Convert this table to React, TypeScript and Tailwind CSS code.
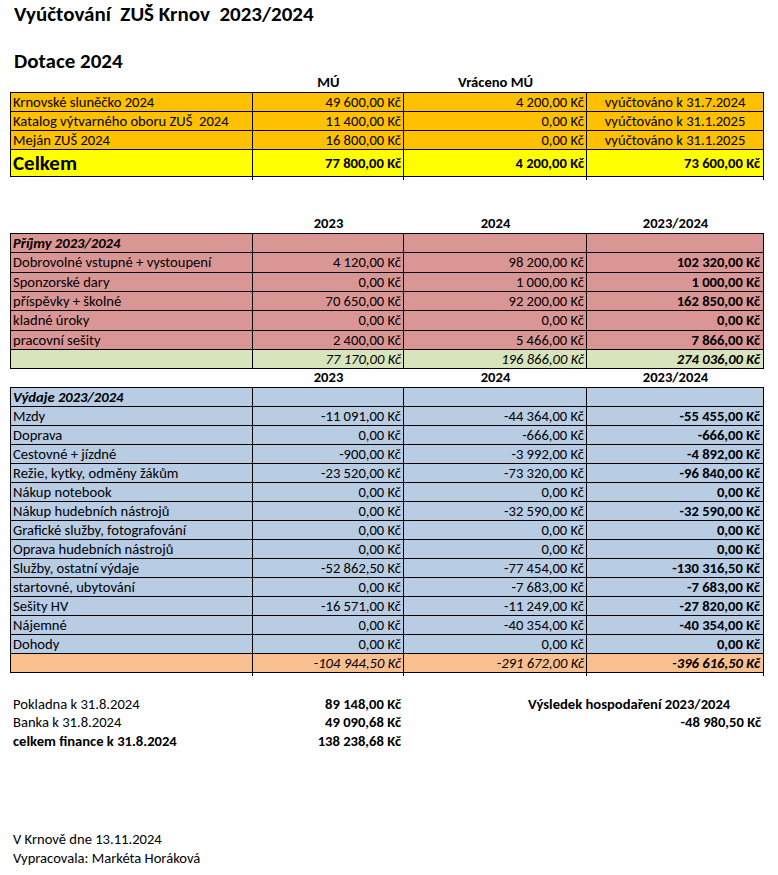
import React from "react";

const COLS = "grid grid-cols-[242px_151px_183px_177px]";
const FONT = { fontFamily: "Carlito, Lato, 'Open Sans', sans-serif" };

type C = { t?: string; a?: "l" | "r" | "c"; cls?: string };

function Row({ cells, bg, h }: { cells: C[]; bg: string; h: string }) {
  return (
    <div className={`${COLS} ${bg} ${h} overflow-hidden`}>
      {cells.map((c, i) => (
        <div
          key={i}
          className={`border-r border-b border-black flex items-center leading-[15px] whitespace-pre ${
            c.a === "r" ? "justify-end pr-[2px]" : c.a === "c" ? "justify-center" : "justify-start pl-[2px]"
          } ${c.cls ?? ""}`}
        >
          {c.t ?? ""}
        </div>
      ))}
    </div>
  );
}

function Header({ a, b, c, h }: { a: string; b: string; c: string; h: string }) {
  return (
    <div className={`${COLS} ${h} font-bold ml-[1px] leading-[14px]`}>
      <div />
      <div className="flex items-center justify-center pb-[2px]">{a}</div>
      <div className="flex items-center justify-center pb-[2px]">{b}</div>
      <div className="flex items-center justify-center pb-[2px]">{c}</div>
    </div>
  );
}

function Stub({ h }: { h: string }) {
  return (
    <div className={`${COLS} ${h} ml-[1px]`}>
      <div />
      <div className="border-l border-black -ml-[1px]" />
      <div className="border-l border-black -ml-[1px]" />
      <div className="border-l border-r border-black -ml-[1px]" />
    </div>
  );
}

const prijmy: [string, string, string, string][] = [
  ["Dobrovolné vstupné + vystoupení", "4 120,00 Kč", "98 200,00 Kč", "102 320,00 Kč"],
  ["Sponzorské dary", "0,00 Kč", "1 000,00 Kč", "1 000,00 Kč"],
  ["příspěvky + školné", "70 650,00 Kč", "92 200,00 Kč", "162 850,00 Kč"],
  ["kladné úroky", "0,00 Kč", "0,00 Kč", "0,00 Kč"],
  ["pracovní sešity", "2 400,00 Kč", "5 466,00 Kč", "7 866,00 Kč"],
];
const prijmyH = ["h-[20px]", "h-[19px]", "h-[19px]", "h-[20px]", "h-[19px]"];

const vydaje: [string, string, string, string][] = [
  ["Mzdy", "-11 091,00 Kč", "-44 364,00 Kč", "-55 455,00 Kč"],
  ["Doprava", "0,00 Kč", "-666,00 Kč", "-666,00 Kč"],
  ["Cestovné + jízdné", "-900,00 Kč", "-3 992,00 Kč", "-4 892,00 Kč"],
  ["Režie, kytky, odměny žákům", "-23 520,00 Kč", "-73 320,00 Kč", "-96 840,00 Kč"],
  ["Nákup notebook", "0,00 Kč", "0,00 Kč", "0,00 Kč"],
  ["Nákup hudebních nástrojů", "0,00 Kč", "-32 590,00 Kč", "-32 590,00 Kč"],
  ["Grafické služby, fotografování", "0,00 Kč", "0,00 Kč", "0,00 Kč"],
  ["Oprava hudebních nástrojů", "0,00 Kč", "0,00 Kč", "0,00 Kč"],
  ["Služby, ostatní výdaje", "-52 862,50 Kč", "-77 454,00 Kč", "-130 316,50 Kč"],
  ["startovné, ubytování", "0,00 Kč", "-7 683,00 Kč", "-7 683,00 Kč"],
  ["Sešity HV", "-16 571,00 Kč", "-11 249,00 Kč", "-27 820,00 Kč"],
  ["Nájemné", "0,00 Kč", "-40 354,00 Kč", "-40 354,00 Kč"],
  ["Dohody", "0,00 Kč", "0,00 Kč", "0,00 Kč"],
];

export default function App() {
  return (
    <div className="w-[778px] h-[875px] bg-white text-black text-[14.6px] pl-[10px] overflow-hidden" style={FONT}>
      <div className="h-[30px] flex items-center pl-[4px] text-[21px] font-bold whitespace-pre">
        Vyúčtování  ZUŠ Krnov  2023/2024
      </div>
      <div className="mt-[19px] h-[25px] flex items-center pl-[4px] text-[21px] font-bold">Dotace 2024</div>
      <Header a="MÚ" b="Vráceno MÚ" c="" h="h-[18px]" />

      {/* Dotace table */}
      <div className="border-l border-t border-black w-[754px]">
        <Row bg="bg-[#FFC000]" h="h-[19px]" cells={[{ t: "Krnovské sluněčko 2024" }, { t: "49 600,00 Kč", a: "r" }, { t: "4 200,00 Kč", a: "r" }, { t: "vyúčtováno k 31.7.2024", a: "c" }]} />
        <Row bg="bg-[#FFC000]" h="h-[19px]" cells={[{ t: "Katalog výtvarného oboru ZUŠ  2024" }, { t: "11 400,00 Kč", a: "r" }, { t: "0,00 Kč", a: "r" }, { t: "vyúčtováno k 31.1.2025", a: "c" }]} />
        <Row bg="bg-[#FFC000]" h="h-[19px]" cells={[{ t: "Meján ZUŠ 2024" }, { t: "16 800,00 Kč", a: "r" }, { t: "0,00 Kč", a: "r" }, { t: "vyúčtováno k 31.1.2025", a: "c" }]} />
        <Row bg="bg-[#FFFF00]" h="h-[27px]" cells={[{ t: "Celkem", cls: "text-[21px] font-bold leading-[22px]" }, { t: "77 800,00 Kč", a: "r", cls: "font-bold" }, { t: "4 200,00 Kč", a: "r", cls: "font-bold" }, { t: "73 600,00 Kč", a: "r", cls: "font-bold pr-[3px]" }]} />
      </div>
      <Stub h="h-[3px]" />

      <div className="h-[35px]" />
      <Header a="2023" b="2024" c="2023/2024" h="h-[18px]" />

      {/* Příjmy */}
      <div className="border-l border-t border-black w-[754px]">
        <Row bg="bg-[#DA9694]" h="h-[19px]" cells={[{ t: "Příjmy 2023/2024", cls: "font-bold italic" }, {}, {}, {}]} />
        {prijmy.map((r, i) => (
          <Row key={i} bg="bg-[#DA9694]" h={prijmyH[i]} cells={[{ t: r[0] }, { t: r[1], a: "r" }, { t: r[2], a: "r" }, { t: r[3], a: "r", cls: "font-bold pr-[3px]" }]} />
        ))}
        <Row bg="bg-[#D8E4BC]" h="h-[19px]" cells={[{}, { t: "77 170,00 Kč", a: "r", cls: "italic" }, { t: "196 866,00 Kč", a: "r", cls: "italic" }, { t: "274 036,00 Kč", a: "r", cls: "italic font-bold pr-[3px]" }]} />
      </div>

      <Header a="2023" b="2024" c="2023/2024" h="h-[18px]" />

      {/* Výdaje */}
      <div className="border-l border-t border-black w-[754px]">
        <Row bg="bg-[#B8CCE4]" h="h-[19px]" cells={[{ t: "Výdaje 2023/2024", cls: "font-bold italic" }, {}, {}, {}]} />
        {vydaje.map((r, i) => (
          <Row key={i} bg="bg-[#B8CCE4]" h="h-[19px]" cells={[{ t: r[0] }, { t: r[1], a: "r" }, { t: r[2], a: "r" }, { t: r[3], a: "r", cls: "font-bold pr-[3px]" }]} />
        ))}
        <Row bg="bg-[#FABF8F]" h="h-[19px]" cells={[{}, { t: "-104 944,50 Kč", a: "r", cls: "italic" }, { t: "-291 672,00 Kč", a: "r", cls: "italic" }, { t: "-396 616,50 Kč", a: "r", cls: "italic font-bold pr-[3px]" }]} />
      </div>
      <Stub h="h-[3px]" />

      {/* Finance */}
      <div className="mt-[18px] ml-[1px]">
        <div className={`${COLS} h-[18px]`}>
          <div className="flex items-center pl-[2px]">Pokladna k 31.8.2024</div>
          <div className="flex items-center justify-end pr-[3px] font-bold">89 148,00 Kč</div>
          <div className="col-span-2 flex items-center pl-[124px] font-bold whitespace-nowrap">Výsledek hospodaření 2023/2024</div>
        </div>
        <div className={`${COLS} h-[19px]`}>
          <div className="flex items-center pl-[2px]">Banka k 31.8.2024</div>
          <div className="flex items-center justify-end pr-[3px] font-bold">49 090,68 Kč</div>
          <div />
          <div className="flex items-center justify-end pr-[3px] font-bold">-48 980,50 Kč</div>
        </div>
        <div className={`${COLS} h-[19px]`}>
          <div className="flex items-center pl-[2px] font-bold">celkem finance k 31.8.2024</div>
          <div className="flex items-center justify-end pr-[3px] font-bold">138 238,68 Kč</div>
          <div />
          <div />
        </div>
      </div>

      <div className="mt-[80px] ml-[1px]">
        <div className="h-[19px] flex items-center pl-[2px]">V Krnově dne 13.11.2024</div>
        <div className="h-[19px] flex items-center pl-[2px]">Vypracovala: Markéta Horáková</div>
      </div>
    </div>
  );
}
